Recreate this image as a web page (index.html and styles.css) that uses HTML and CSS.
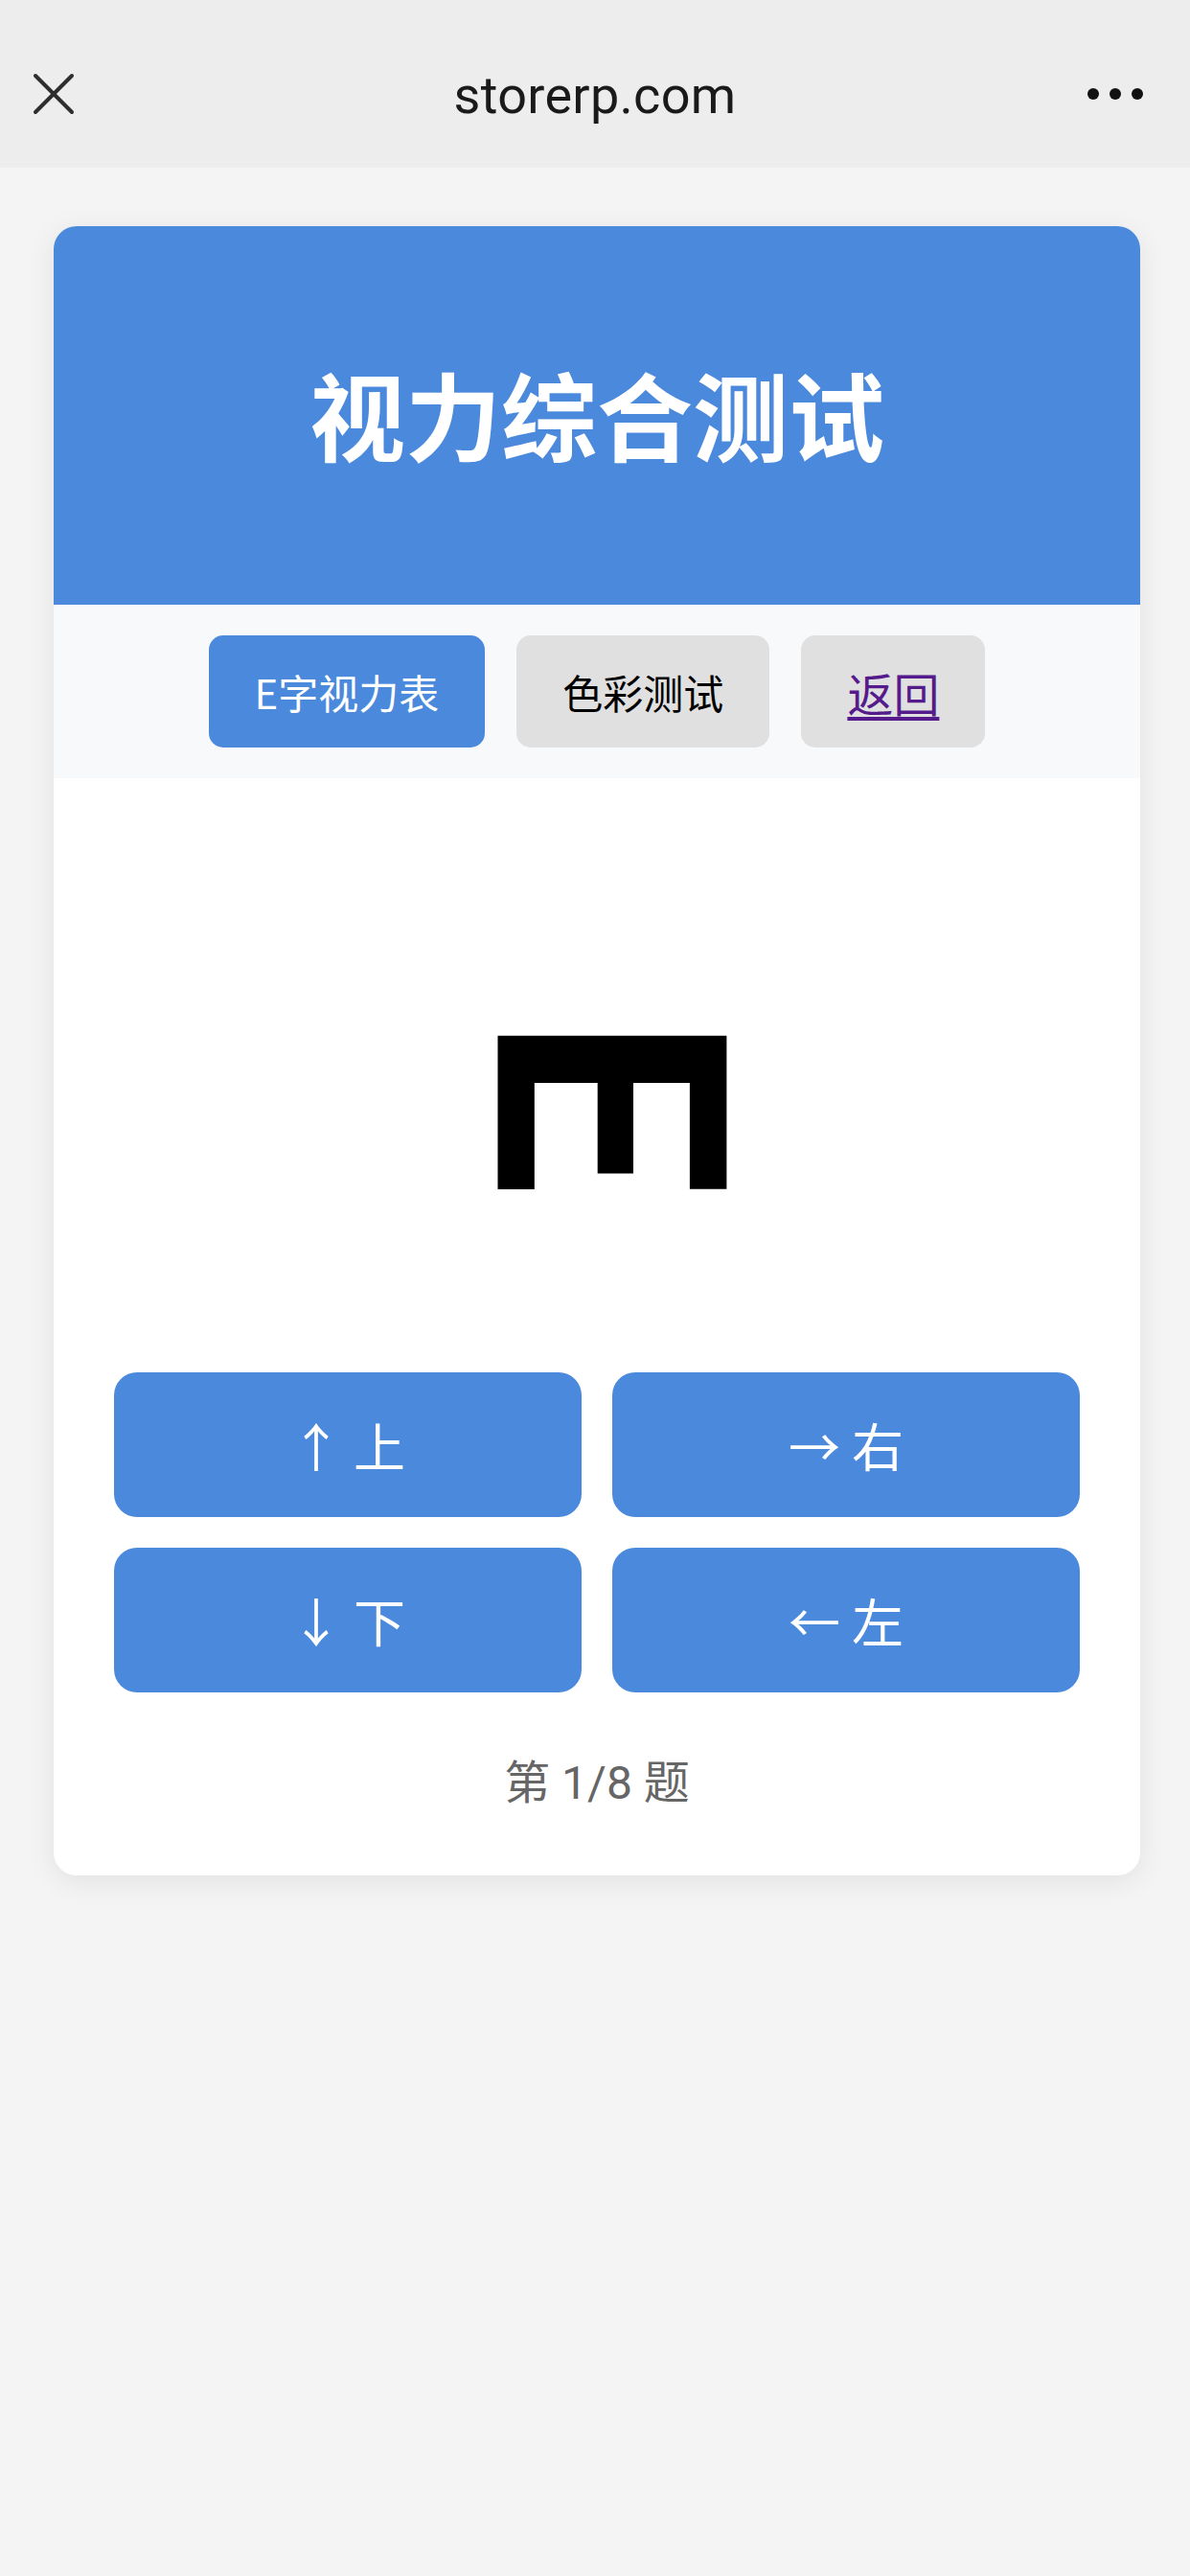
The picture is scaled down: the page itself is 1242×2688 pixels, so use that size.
FILE: index.html
```html
<!DOCTYPE html>
<html lang="zh-CN">
<head>
<meta charset="utf-8">
<title>视力综合测试</title>
<link rel="stylesheet" href="styles.css">
</head>
<body>
<header class="topbar">
  <div class="topbar-left">
    <svg class="close-icon" viewBox="0 0 44 44" width="44" height="44" aria-hidden="true">
      <path d="M3 3 L41 41 M41 3 L3 41" stroke="#2e2e2e" stroke-width="4" stroke-linecap="round" fill="none"/>
    </svg>
  </div>
  <div class="topbar-title">storerp.com</div>
  <div class="topbar-right">
    <span class="dot"></span><span class="dot"></span><span class="dot"></span>
  </div>
</header>
<main class="page">
  <section class="card">
    <div class="card-header">
      <h1 class="title">视力综合测试</h1>
    </div>
    <nav class="tabs">
      <button class="tab tab-active">E字视力表</button>
      <button class="tab">色彩测试</button>
      <button class="tab"><a class="back-link" href="#">返回</a></button>
    </nav>
    <div class="content">
      <div class="optotype-area">
        <span class="optotype">E</span>
      </div>
      <div class="answers">
        <button class="answer">↑ 上</button>
        <button class="answer">→ 右</button>
        <button class="answer">↓ 下</button>
        <button class="answer">← 左</button>
      </div>
      <div class="counter">第 1/8 题</div>
    </div>
  </section>
</main>
</body>
</html>
```
FILE: styles.css
```css
* {
  box-sizing: border-box;
}

html, body {
  margin: 0;
  padding: 0;
}

body {
  background: #f4f4f4;
  font-family: "Noto Sans CJK SC", "Noto Sans", sans-serif;
  min-height: 2688px;
}

.topbar {
  height: 175px;
  padding-top: 20px;
  background: #ededed;
  display: grid;
  grid-template-columns: 1fr auto 1fr;
  align-items: center;
}

.topbar-left {
  padding-left: 34px;
  display: flex;
  align-items: center;
}

.close-icon {
  display: block;
}

.topbar-title {
  font-family: Roboto, "Noto Sans", sans-serif;
  font-size: 54px;
  color: #1a1a1a;
  letter-spacing: 0.3px;
  padding-top: 4px;
}

.topbar-right {
  display: flex;
  justify-content: flex-end;
  gap: 11px;
  padding-right: 49px;
}

.dot {
  width: 12px;
  height: 12px;
  border-radius: 50%;
  background: #111;
}

.page {
  padding: 61px 52px 0 56px;
}

.card {
  background: #fff;
  border-radius: 24px;
  overflow: hidden;
  box-shadow: 0 6px 30px rgba(0, 0, 0, 0.08);
}

.card-header {
  height: 395px;
  background: #4a89dc;
  display: flex;
  align-items: center;
  justify-content: center;
  padding-bottom: 6px;
}

.title {
  margin: 0;
  color: #fff;
  font-size: 100px;
  font-weight: 700;
  line-height: 1.2;
}

.tabs {
  background: #f8f9fa;
  padding: 32px 0;
  display: flex;
  justify-content: center;
  gap: 33px;
}

.tab {
  height: 117px;
  padding: 0 48px;
  border: none;
  border-radius: 15px;
  background: #e0e0e0;
  color: #000;
  font-family: "Noto Sans CJK SC", sans-serif;
  font-size: 42px;
}

.tab-active {
  background: #4a89dc;
  color: #fff;
}

.back-link {
  color: #551a8b;
  font-size: 48px;
  text-decoration: underline;
  text-underline-offset: 5px;
}

.content {
  padding: 60px 63px 60px;
}

.optotype-area {
  height: 500px;
  padding-top: 64px;
  padding-left: 22px;
  display: flex;
  align-items: center;
  justify-content: center;
  margin-bottom: 60px;
}

.optotype {
  display: block;
  font-family: Roboto, "Liberation Sans", sans-serif;
  font-weight: 700;
  font-size: 336px;
  line-height: 1;
  color: #000;
  transform: rotate(90deg);
}

.answers {
  display: grid;
  grid-template-columns: 1fr 1fr;
  gap: 32px;
}

.answer {
  height: 151px;
  border: none;
  border-radius: 24px;
  background: #4a89dc;
  color: #fff;
  font-family: "Noto Sans CJK SC", sans-serif;
  font-size: 54px;
}

.counter {
  margin-top: 59px;
  text-align: center;
  color: #666;
  font-family: Roboto, "Noto Sans CJK SC", sans-serif;
  font-size: 48px;
  line-height: 72px;
}
```
